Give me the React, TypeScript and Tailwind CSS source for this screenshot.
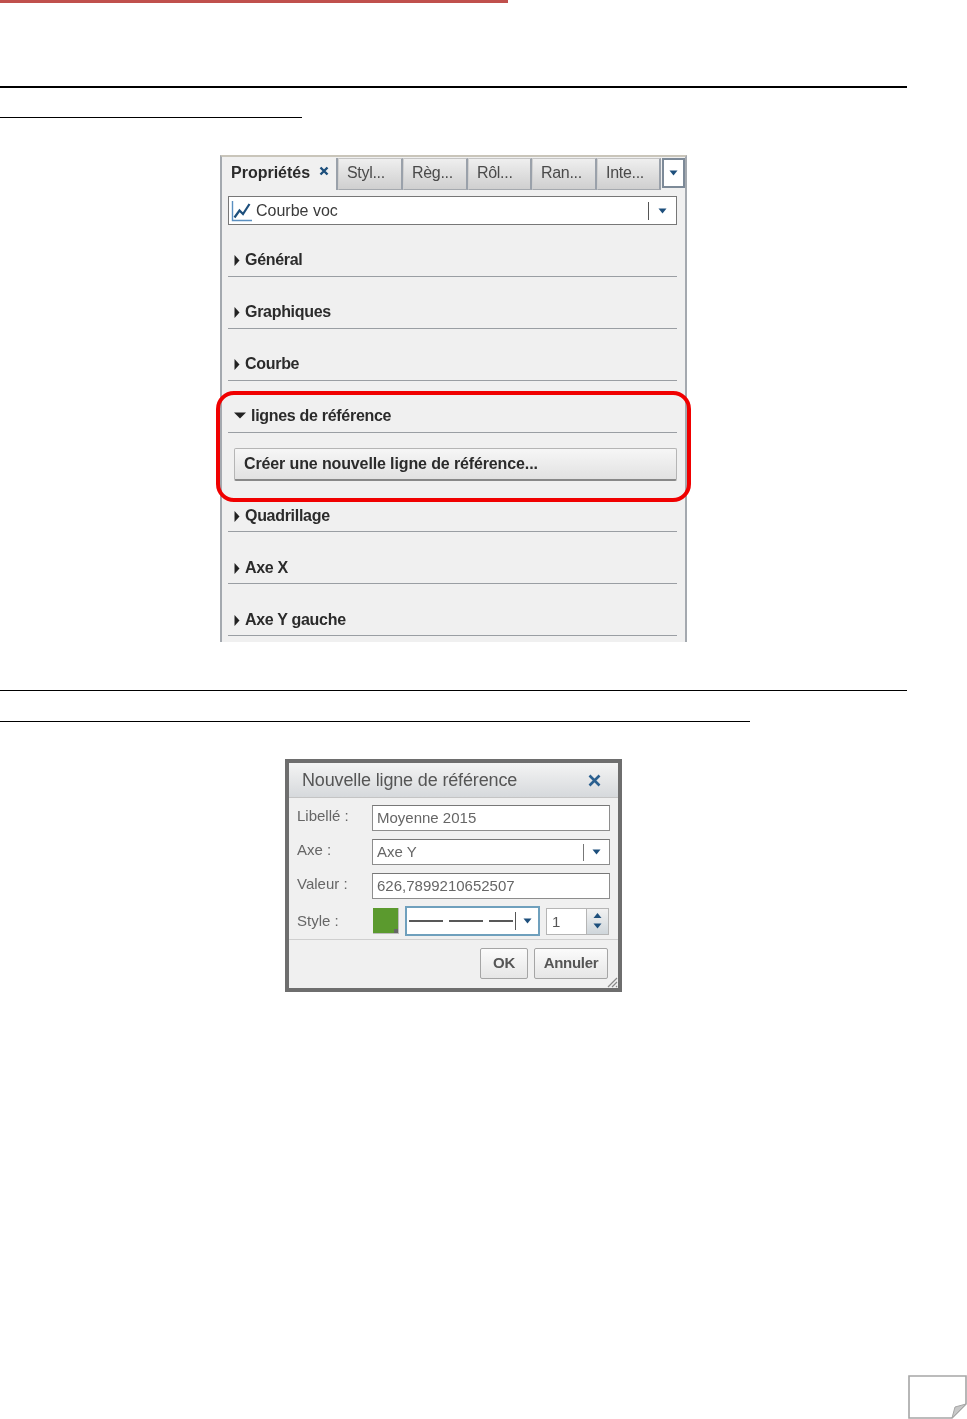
import React from "react";

function Caret({ className = "" }: { className?: string }) {
  return (
    <svg width="9" height="6" viewBox="0 0 9 6" className={className}>
      <path d="M0.5 0.5h8L4.5 5.5z" fill="#1d4f7c" />
    </svg>
  );
}

function Section({ label, open = false, low = false }: { label: string; open?: boolean; low?: boolean }) {
  return (
    <div className={`h-[52px] ml-[6px] mr-[8px] border-b border-[#9a9ea3] flex items-end pl-[6px] ${low ? "pb-[5px]" : "pb-[6px]"}`}>
      {open ? (
        <svg width="12" height="7" viewBox="0 0 12 7" className="mb-[7px] mr-[5px]">
          <path d="M0 0.5h12L6 6.5z" fill="#222" />
        </svg>
      ) : (
        <svg width="6" height="11" viewBox="0 0 6 11" className="mb-[4px] mr-[5px]">
          <path d="M0.5 0v11L5.5 5.5z" fill="#222" />
        </svg>
      )}
      <span className="text-[16px] tracking-[-0.3px] leading-[20px] font-bold text-[#2b2b2b]">{label}</span>
    </div>
  );
}

function Tab({ label, w }: { label: string; w: string }) {
  return (
    <div
      className={`${w} h-[32px] shrink-0 border-r-2 border-l border-t border-r-[#9aa1aa] border-l-[#d0d0d0] border-t-[#c4c4c4] bg-gradient-to-b from-[#efefef] to-[#cfcfcf] border-b border-b-[#a5a9ae] pl-[8px] text-[16px] tracking-[-0.3px] leading-[28px] text-[#4a4a4a]`}
    >
      {label}
    </div>
  );
}

function Field({ label, children }: { label: string; children: React.ReactNode }) {
  return (
    <div className="flex h-[26px] mb-[8px] items-center">
      <div className="w-[79px] pl-[4px] pb-[4px] text-[15px] leading-[18px] text-[#666] shrink-0">{label}</div>
      {children}
    </div>
  );
}

function DialogInput({ value, select = false }: { value: string; select?: boolean }) {
  return (
    <div className="w-[238px] h-[26px] bg-white border border-[#8d8d8d] border-t-[#777] flex items-center pl-[4px] text-[15px] text-[#666]">
      <span className="flex-1">{value}</span>
      {select && (
        <>
          <span className="w-px h-[17px] bg-[#777]" />
          <Caret className="mx-[8px]" />
        </>
      )}
    </div>
  );
}

export default function App() {
  return (
    <div className="w-[967px] h-[1419px] bg-white overflow-hidden flex flex-col font-['Liberation_Sans',Arial,sans-serif]">
      <div className="w-[508px] h-[3px] bg-[#c0504d] shrink-0" />

      <div className="w-[907px] h-[2px] bg-black mt-[83px] shrink-0" />
      <div className="w-[302px] h-px bg-black mt-[29px] shrink-0" />

      {/* Properties panel */}
      <div className="relative w-[467px] h-[487px] ml-[220px] mt-[37px] bg-[#f0f0f0] border-x-2 border-t-2 border-x-[#a4a9af] border-t-[#c9c5ba] shrink-0 blur-[0.4px]">
        <div className="flex pt-px">
          <div className="w-[116px] h-[32px] shrink-0 border-r-2 border-r-[#9aa1aa] flex pl-[9px] leading-[30px] text-[16px] font-bold text-[#2b2b2b]">
            Propriétés
            <svg width="10" height="10" viewBox="0 0 10 10" className="ml-[9px] mt-[8px]">
              <path d="M1.5 1.5l7 7M8.5 1.5l-7 7" stroke="#1d4f7c" strokeWidth="2.4" />
            </svg>
          </div>
          <Tab label="Styl..." w="w-[65px]" />
          <Tab label="Règ..." w="w-[65px]" />
          <Tab label="Rôl..." w="w-[64px]" />
          <Tab label="Ran..." w="w-[65px]" />
          <Tab label="Inte..." w="w-[64px]" />
          <div className="w-[23px] h-[30px] ml-px border-2 border-[#7d8a98] bg-white flex items-center justify-center shrink-0">
            <Caret />
          </div>
        </div>

        <div className="mt-[6px] ml-[6px] mr-[8px] h-[29px] bg-white border border-[#777] flex items-center pl-[2px]">
          <svg width="22" height="22" viewBox="0 0 22 22" className="mr-[3px]">
            <path d="M1.5 1v19.5H21" fill="none" stroke="#5a8fc0" strokeWidth="1.4" />
            <path d="M3.5 17.5l5-7 3.5 3.5 6.5-10" fill="none" stroke="#1d4f7c" strokeWidth="2.2" />
          </svg>
          <span className="flex-1 text-[16px] text-[#3a3a3a]">Courbe voc</span>
          <span className="w-px h-[18px] bg-[#555]" />
          <Caret className="mx-[9px]" />
        </div>

        <Section label="Général" />
        <Section label="Graphiques" />
        <Section label="Courbe" />
        <Section label="lignes de référence" open />
        <div className="mt-[15px] ml-[12px] mr-[8px] h-[33px] rounded-[2px] border border-[#b5b5b5] border-b-2 border-b-[#888] bg-gradient-to-b from-[#f6f6f6] to-[#e2e2e2] pl-[9px] text-[16px] tracking-[-0.125px] font-bold leading-[29px] text-[#2b2b2b]">
          Créer une nouvelle ligne de référence...
        </div>
        <div className="-mt-[1px]">
          <Section label="Quadrillage" low />
        </div>
        <Section label="Axe X" low />
        <Section label="Axe Y gauche" low />

        <div className="absolute left-[-6px] top-[234px] w-[475px] h-[111px] border-[4px] border-[#f00000] rounded-[18px]" />
      </div>

      <div className="w-[907px] h-px bg-black mt-[48px] shrink-0" />
      <div className="w-[750px] h-px bg-black mt-[30px] shrink-0" />

      {/* Dialog */}
      <div className="w-[337px] h-[233px] ml-[285px] mt-[37px] border-4 border-[#6e6e6e] bg-[#f0f0f0] flex flex-col shrink-0 blur-[0.6px]">
        <div className="h-[35px] bg-gradient-to-b from-[#f4f4f4] to-[#d6d9dc] border-b border-[#c4c4c4] flex items-center justify-between pl-[13px] pr-[17px] text-[18px] tracking-[-0.15px] text-[#555] shrink-0">
          <span>Nouvelle ligne de référence</span>
          <svg width="13" height="13" viewBox="0 0 13 13">
            <path d="M1.5 1.5l10 10M11.5 1.5l-10 10" stroke="#2a5f8f" strokeWidth="2.6" />
          </svg>
        </div>
        <div className="pl-[4px] pt-[7px] h-[142px] border-b border-[#cfcfcf] shrink-0">
          <Field label="Libellé :"><DialogInput value="Moyenne 2015" /></Field>
          <Field label="Axe :"><DialogInput value="Axe Y" select /></Field>
          <Field label="Valeur :"><DialogInput value="626,7899210652507" /></Field>
          <div className="flex h-[28px] items-center">
            <div className="w-[80px] pl-[4px] text-[15px] leading-[18px] text-[#666] shrink-0">Style :</div>
            <div className="relative w-[26px] h-[26px] bg-[#5b9a2e] border-b border-r border-[#bcbcbc] shrink-0">
              <span className="absolute right-0 bottom-0 w-[4px] h-[4px] bg-[#666]" />
            </div>
            <div className="w-[135px] h-[30px] ml-[6px] border-2 border-[#6fa0bd] bg-white flex items-center pl-[2px] shrink-0">
              <svg width="104" height="2" viewBox="0 0 104 2">
                <path d="M0 1h34M40 1h34M80 1h24" stroke="#222" strokeWidth="1.4" />
              </svg>
              <span className="w-px h-[18px] bg-[#555] ml-[2px]" />
              <Caret className="ml-[7px]" />
            </div>
            <div className="w-[63px] h-[27px] ml-[6px] bg-white border border-[#b5b5b5] flex shrink-0">
              <span className="flex-1 pl-[5px] text-[15px] leading-[25px] text-[#555]">1</span>
              <div className="w-[22px] border-l border-[#b5b5b5] flex flex-col items-center justify-evenly bg-gradient-to-b from-[#f2f2f2] to-[#cfd6db]">
                <svg width="9" height="5" viewBox="0 0 9 5"><path d="M4.5 0l4 5h-8z" fill="#1d4f7c" /></svg>
                <Caret />
              </div>
            </div>
          </div>
        </div>
        <div className="relative flex-1 flex justify-end gap-[6px] pt-[8px] pr-[10px]">
          <div className="w-[48px] h-[31px] rounded-[2px] border border-[#a5a5a5] bg-gradient-to-b from-[#fbfbfb] to-[#e6e6e6] text-center text-[15px] tracking-[-0.3px] font-bold leading-[27px] text-[#555]">OK</div>
          <div className="w-[74px] h-[31px] rounded-[2px] border border-[#a5a5a5] bg-gradient-to-b from-[#fbfbfb] to-[#e6e6e6] text-center text-[15px] tracking-[-0.3px] font-bold leading-[27px] text-[#555]">Annuler</div>
          <svg width="11" height="11" viewBox="0 0 11 11" className="absolute right-0 bottom-0">
            <path d="M1 10l9-9M5 10l5-5M9 10l1-1" stroke="#888" strokeWidth="1.2" />
          </svg>
        </div>
      </div>

      {/* Page corner */}
      <div className="mt-auto ml-[908px] w-[59px] h-[44px] shrink-0">
        <svg width="59" height="44" viewBox="0 0 59 44">
          <path d="M1 1H58V29L44 43H1z" fill="#fff" stroke="#a6a6a6" strokeWidth="1.6" />
          <path d="M44 43L47 32L58 29z" fill="#c8c8c8" stroke="#a6a6a6" strokeWidth="1" />
        </svg>
      </div>
    </div>
  );
}
